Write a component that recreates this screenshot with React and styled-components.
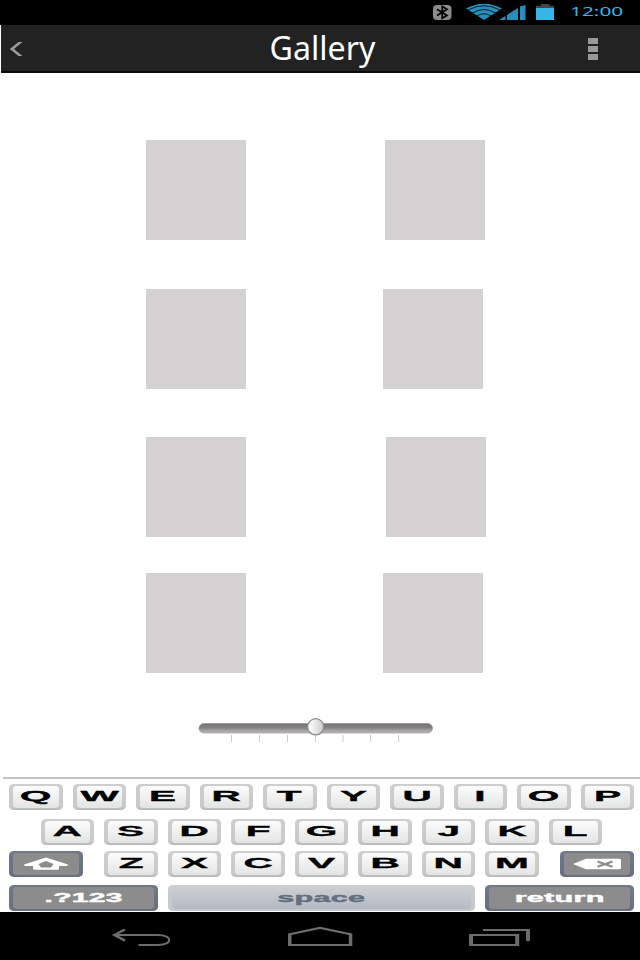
import React from 'react';
import styled, { createGlobalStyle } from 'styled-components';

const GlobalStyle = createGlobalStyle`
  * { box-sizing: border-box; }
  body { margin: 0; background: #fff; }
`;

const Screen = styled.div`
  width: 640px;
  height: 960px;
  overflow: hidden;
  display: flex;
  flex-direction: column;
  background: #fff;
  font-family: "Noto Sans", sans-serif;
`;

const StatusBar = styled.div`
  height: 25px;
  flex: none;
  background: #000;
  display: flex;
  padding-left: 430px;
  padding-right: 17px;
  justify-content: space-between;
`;

const Clock = styled.span`
  color: #35b5e5;
  font-size: 13px;
  line-height: 23px;
  transform: scaleX(1.6);
  transform-origin: right center;
`;

const Header = styled.header`
  height: 48px;
  flex: none;
  margin-left: 1px;
  padding: 0 42px 2px 8px;
  background: #222;
  border-bottom: 2px solid #0b0a0b;
  display: grid;
  grid-template-columns: 60px 1fr 60px;
  align-items: center;
`;

const Title = styled.h1`
  margin: 0;
  color: #fff;
  font-size: 33.5px;
  font-weight: 400;
  line-height: 44px;
  text-align: center;
  white-space: nowrap;
  transform: translateX(19px) scaleX(0.96);
`;

const MenuDots = styled.div`
  display: flex;
  flex-direction: column;
  gap: 2px;
  justify-self: end;
  margin-top: 3px;
`;

const Dot = styled.i`
  width: 10px;
  height: 6px;
  background: #999;
`;

const Gallery = styled.main`
  height: 644px;
  flex: none;
  padding: 67px 0 0 146px;
`;

const PhotoRow = styled.div`
  display: flex;
  gap: ${(p) => p.$gap}px;
  margin-bottom: ${(p) => p.$after}px;
`;

const Photo = styled.div`
  width: 100px;
  height: 100px;
  background: #d3d1d2;
`;

const SliderArea = styled.div`
  height: 60px;
  flex: none;
  padding-left: 190px;
`;

const Keyboard = styled.div`
  height: 135px;
  flex: none;
  margin-left: 3px;
  padding: 5px 6px 0;
  border-top: 2px solid #c0c2c6;
`;

const KeyRow = styled.div`
  display: flex;
  justify-content: center;
  gap: 10px;
  height: 26px;
  margin-bottom: ${(p) => p.$after || 0}px;
`;

const LetterGroup = styled.div`
  display: flex;
  gap: 10px;
  margin: 0 11px;
`;

const Key = styled.div`
  width: ${(p) => p.$width || 53.5}px;
  height: 26px;
  flex: none;
  display: flex;
  padding: 2px 4px;
  border-radius: 5px / 4px;
  background: linear-gradient(#cecece, #cacaca 85%, #b9b9bb);
`;

const KeyFace = styled.div`
  flex: 1;
  display: flex;
  align-items: center;
  justify-content: center;
  border-radius: 4px / 3px;
  background: linear-gradient(#fcfcfc, #e3e4e4);
`;

const DarkKey = styled(Key)`
  padding: 2px 4px;
  background: linear-gradient(#6f7988, #667080);
`;

const DarkFace = styled(KeyFace)`
  background: #8c8c8c;
`;

const SpaceKey = styled(Key)`
  padding-top: 1px;
  background: linear-gradient(#cdcecf, #c4c6ca);
`;

const SpaceFace = styled(KeyFace)`
  padding-top: 2px;
  background: linear-gradient(#cdd0d1, #b4bac5);
`;

const Letter = styled.span`
  font: bold 14px/20px "Liberation Sans", Arial, sans-serif;
  color: #000;
  -webkit-text-stroke: 0.3px #000;
  transform: translateY(-1px) scaleX(2.9);
`;

const Caption = styled.span`
  font: bold 12px/20px "Liberation Sans", Arial, sans-serif;
  color: ${(p) => p.$color || '#fff'};
  -webkit-text-stroke: 0.4px ${(p) => p.$color || '#fff'};
  letter-spacing: 0.1px;
  white-space: nowrap;
  transform: scaleX(${(p) => p.$stretch});
`;

const NavBar = styled.nav`
  height: 48px;
  flex: none;
  background: #000;
`;

const StatusIcons = () => (
  <svg width="132" height="25" viewBox="430 0 132 25">
    <rect x="433" y="5" width="18.5" height="15" rx="4" fill="#8b8b8b" />
    <path d="M437 9.2 L447 15.5 L442.2 18.3 V6.5 L447 9.3 L437 15.5" fill="none" stroke="#000" strokeWidth="1.7" />
    <path d="M466 8.5 Q484 -1 502 8.5 L484 20 Z" fill="#288fbd" />
    <path d="M468 10 Q484 1.5 500 10 M472.5 13 Q484 6 495.5 13 M477 16 Q484 11.5 491 16" fill="none" stroke="#000" strokeWidth="0.8" />
    <path d="M499 20 L505.5 16 V20 Z M507 20 V15 L518 8 V20 Z M520 20 V6.5 L525.5 5 V20 Z" fill="#288fbd" />
    <path d="M541 4 H549.5 V5.8 H554 V8 H536 V5.8 H541 Z" fill="#484344" />
    <rect x="536" y="8" width="18" height="12" fill="#36b5e6" />
  </svg>
);

const BackIcon = styled.svg`
  margin-top: 3px;
`;

const BackArrow = () => (
  <BackIcon width="14" height="16" viewBox="0 0 14 16">
    <path d="M9.5 1 H13.5 L5 8 L13.5 15 H9.5 L0.8 8 Z" fill="#999" />
  </BackIcon>
);

const ticks = [231.5, 259.5, 287.5, 315.5, 343, 370.5, 398.5];

const Slider = () => (
  <svg width="260" height="44" viewBox="190 717 260 44">
    <defs>
      <linearGradient id="track" x1="0" y1="0" x2="0" y2="1">
        <stop offset="0" stopColor="#777374" />
        <stop offset="0.45" stopColor="#858283" />
        <stop offset="1" stopColor="#c1bfc0" />
      </linearGradient>
      <linearGradient id="knob">
        <stop offset="0.2" stopColor="#fafafa" />
        <stop offset="1" stopColor="#c9c8c9" />
      </linearGradient>
    </defs>
    <rect x="199" y="723.5" width="233.5" height="9.5" rx="4.75" fill="url(#track)" stroke="#888586" strokeOpacity="0.7" strokeWidth="0.8" />
    {ticks.map((x) => (
      <path key={x} d={`M${x} 735 V742`} stroke="#cccbcc" />
    ))}
    <circle cx="315.7" cy="726.8" r="8.1" fill="url(#knob)" stroke="#8a8788" strokeWidth="1.2" />
  </svg>
);

const ShiftIcon = () => (
  <svg width="44" height="14" viewBox="0 0 44 14">
    <path d="M22 0.5 L44 7.5 Q44 9 42 9 H35 V11.5 Q35 12.8 33 12.8 H11 Q9 12.8 9 11.5 V9 H2 Q0 9 0 7.5 Z" fill="#fff" />
    <path d="M22 4 L29.5 7 L27 10.5 H17 L14.5 7 Z" fill="#8c8c8c" />
  </svg>
);

const DeleteIcon = () => (
  <svg width="48" height="12" viewBox="0 0 48 12">
    <path d="M0 6 L13 0.8 H46 Q48 0.8 48 2 V10 Q48 11.2 46 11.2 H13 Z" fill="#fff" />
    <path d="M24.5 3.4 L39.5 8.8 M39.5 3.4 L24.5 8.8" stroke="#8c8c8c" strokeWidth="2.1" />
  </svg>
);

const NavIcons = () => (
  <svg width="640" height="48" viewBox="0 912 640 48" fill="none" stroke="#6c6c6c">
    <path d="M114 935 H158 C173 935 173 945 158 945 H138.5" strokeWidth="2" />
    <path d="M125 929.5 L114.5 935 L125 940.7" strokeWidth="2.5" />
    <path d="M288 933.4 L320 926.8 L352.3 933.4 V946 H288 Z M291.5 935 V944 H348.8 V935 L320 929.1 Z" fill="#6c6c6c" fillRule="evenodd" stroke="none" />
    <path d="M469 934 H519.2 V946 H469 Z M473 936 V944 H515.2 V936 Z M483 929 H530 V941 H526 V931 H483 Z" fill="#6c6c6c" fillRule="evenodd" stroke="none" />
  </svg>
);

const Letters = ({ text }) =>
  text.split('').map((c) => (
    <Key key={c}>
      <KeyFace>
        <Letter>{c}</Letter>
      </KeyFace>
    </Key>
  ));

const photoRows = [
  { gap: 139, after: 49 },
  { gap: 137, after: 48 },
  { gap: 140, after: 36 },
  { gap: 137, after: 0 },
];

export default function App() {
  return (
    <>
      <GlobalStyle />
      <Screen>
        <StatusBar>
          <StatusIcons />
          <Clock>12:00</Clock>
        </StatusBar>
        <Header>
          <BackArrow />
          <Title>Gallery</Title>
          <MenuDots>
            <Dot />
            <Dot />
            <Dot />
          </MenuDots>
        </Header>
        <Gallery>
          {photoRows.map((row, i) => (
            <PhotoRow key={i} $gap={row.gap} $after={row.after}>
              <Photo />
              <Photo />
            </PhotoRow>
          ))}
        </Gallery>
        <SliderArea>
          <Slider />
        </SliderArea>
        <Keyboard>
          <KeyRow $after={8.5}>
            <Letters text="QWERTYUIOP" />
          </KeyRow>
          <KeyRow $after={6.7}>
            <Letters text="ASDFGHJKL" />
          </KeyRow>
          <KeyRow $after={7.4}>
            <DarkKey $width={74}>
              <DarkFace>
                <ShiftIcon />
              </DarkFace>
            </DarkKey>
            <LetterGroup>
              <Letters text="ZXCVBNM" />
            </LetterGroup>
            <DarkKey $width={74}>
              <DarkFace>
                <DeleteIcon />
              </DarkFace>
            </DarkKey>
          </KeyRow>
          <KeyRow>
            <DarkKey $width={149}>
              <DarkFace>
                <Caption $stretch={2.5}>.?123</Caption>
              </DarkFace>
            </DarkKey>
            <SpaceKey $width={307}>
              <SpaceFace>
                <Caption $color="#647080" $stretch={2.55}>space</Caption>
              </SpaceFace>
            </SpaceKey>
            <DarkKey $width={149}>
              <DarkFace>
                <Caption $stretch={2.55}>return</Caption>
              </DarkFace>
            </DarkKey>
          </KeyRow>
        </Keyboard>
        <NavBar>
          <NavIcons />
        </NavBar>
      </Screen>
    </>
  );
}
